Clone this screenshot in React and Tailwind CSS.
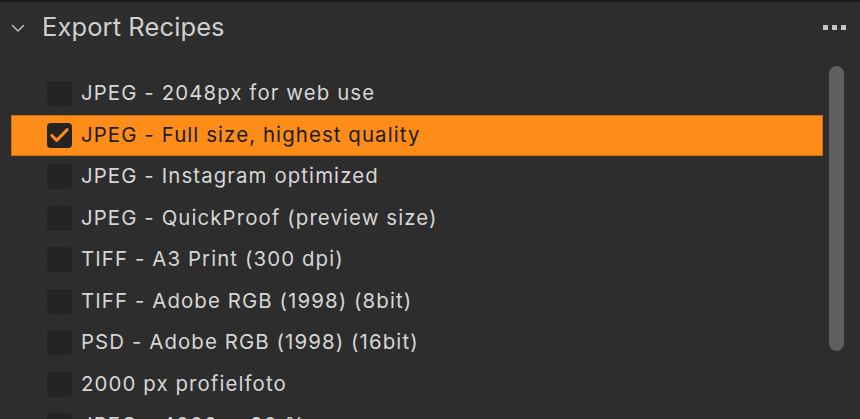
import { Check } from 'lucide-react'

const recipes = [
  'JPEG - 2048px for web use',
  'JPEG - Full size, highest quality',
  'JPEG - Instagram optimized',
  'JPEG - QuickProof (preview size)',
  'TIFF - A3 Print (300 dpi)',
  'TIFF - Adobe RGB (1998) (8bit)',
  'PSD - Adobe RGB (1998) (16bit)',
  '2000 px profielfoto',
  'JPEG - 4000px 80 %',
]

const selected = 1

export default function App() {
  return (
    <div className="relative w-[860px] h-[419px] overflow-hidden bg-[#2d2d2d] border-t-2 border-[#1d1d1d] font-['Inter',sans-serif]">
      {/* Header */}
      <div className="flex items-center h-[50px] pl-[10px] pr-[14px]">
        <svg width="16" height="16" viewBox="0 0 16 16" className="text-[#bdbdbd] mt-[2px]">
          <path d="M2.5 5.5 L8 11 L13.5 5.5" fill="none" stroke="currentColor" strokeWidth="1.5" strokeLinecap="round" strokeLinejoin="round" />
        </svg>
        <span className="ml-[16px] text-[25.5px] text-[#cfcfcf] tracking-[0.1px]">Export Recipes</span>
        <div className="ml-auto flex gap-[4px]">
          <span className="w-[5px] h-[5px] bg-[#c4c4c4]" />
          <span className="w-[5px] h-[5px] bg-[#c4c4c4]" />
          <span className="w-[5px] h-[5px] bg-[#c4c4c4]" />
        </div>
      </div>

      {/* List */}
      <div className="mt-[21px] pl-[11px] pr-[37px]">
        {recipes.map((r, i) => {
          const on = i === selected
          return (
            <div
              key={r}
              className={`flex items-center h-[41.5px] pl-[36px] ${on ? 'bg-[#fd8c18] border border-[#c86f12] text-[#1c1c1c]' : 'text-[#d6d6d6]'}`}
            >
              <div className={`flex items-center justify-center w-[25px] h-[25px] rounded-[4px] ${on ? 'bg-[#232323] -ml-px' : 'bg-[#242424]'}`}>
                {on && <Check size={23} strokeWidth={3.2} className="text-[#fd8c18]" />}
              </div>
              <span className="ml-[9px] text-[20.4px] tracking-[1.1px]">{r}</span>
            </div>
          )
        })}
      </div>

      {/* Scrollbar */}
      <div className="absolute left-[829px] top-[64px] w-[15px] h-[285px] rounded-full bg-[#5f5f5f]" />
    </div>
  )
}
